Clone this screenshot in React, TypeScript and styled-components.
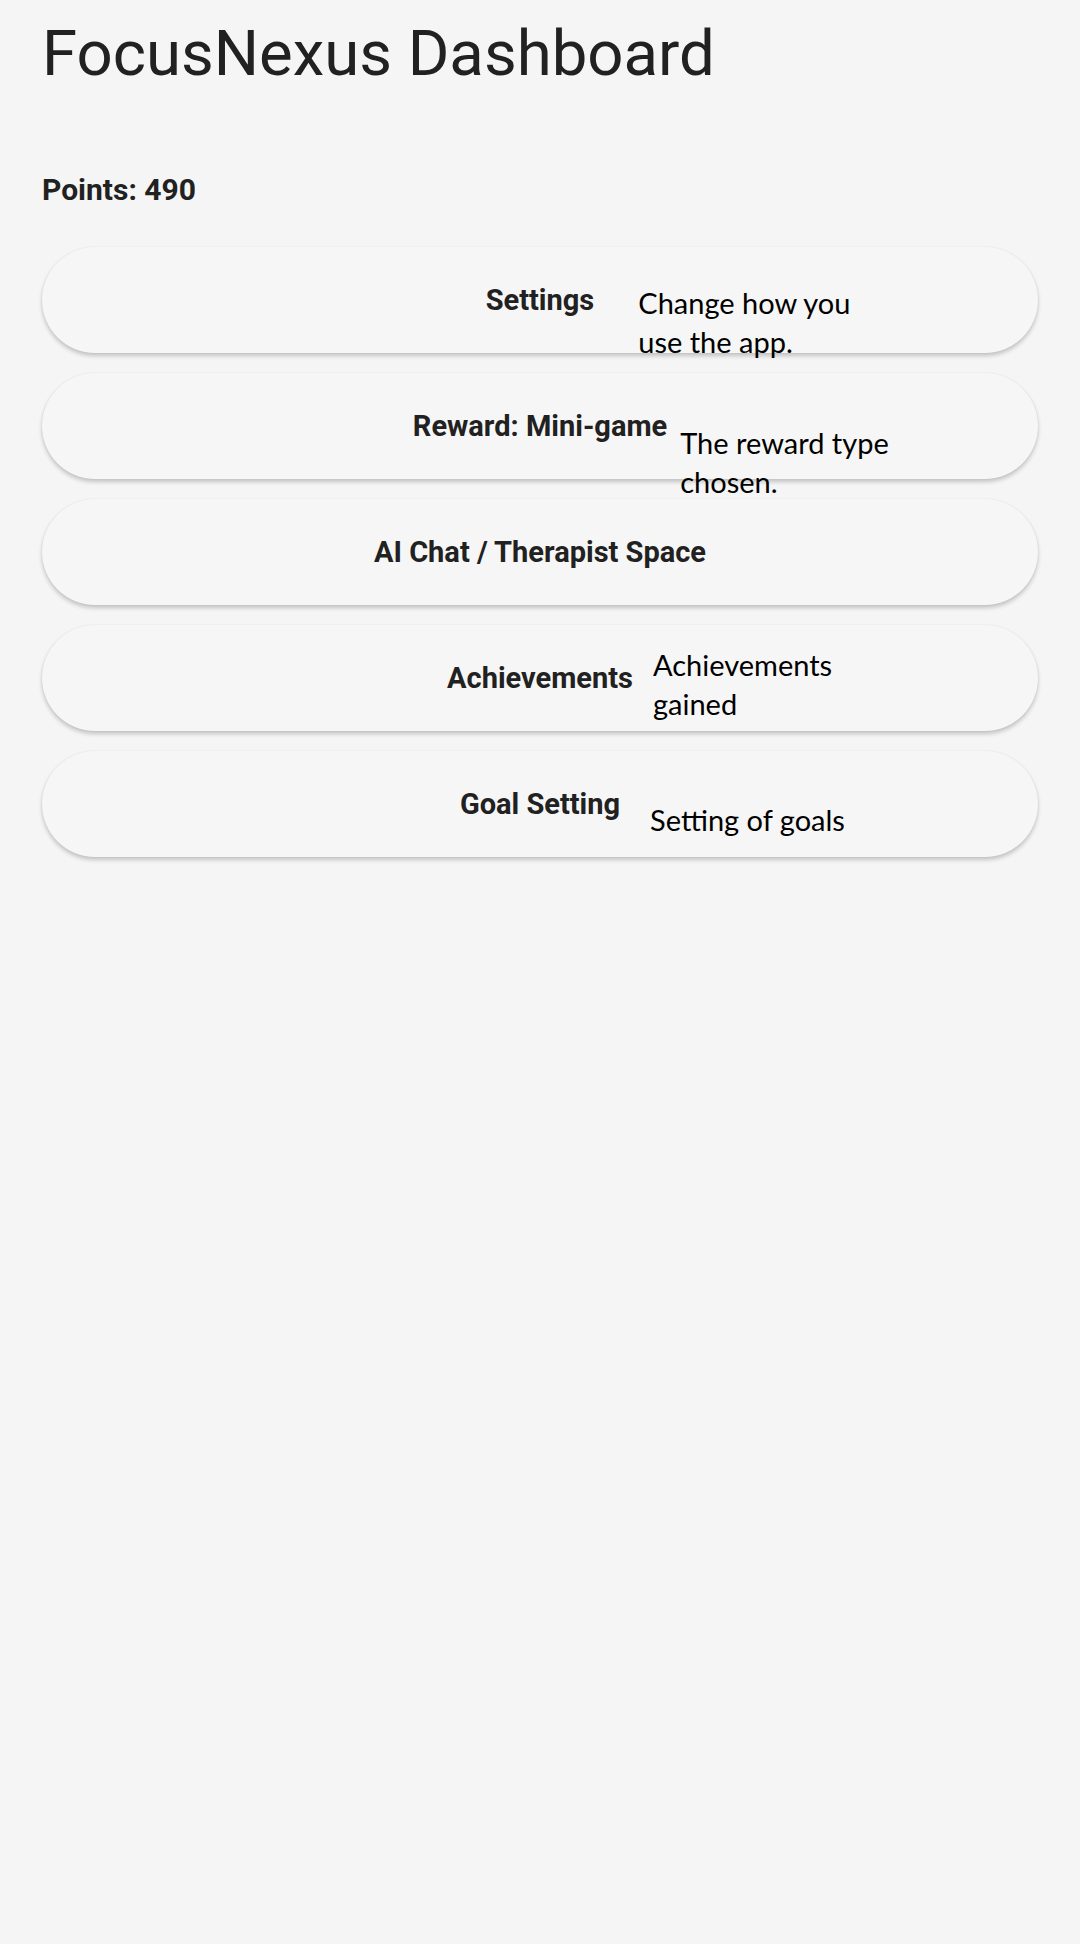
import React from "react";
import styled, { createGlobalStyle } from "styled-components";

const GlobalStyle = createGlobalStyle`
  html, body {
    margin: 0;
    padding: 0;
    background: #f5f5f5;
  }
  body {
    font-family: Roboto, "Liberation Sans", sans-serif;
    color: #212121;
  }
  * { box-sizing: border-box; }
`;

const Page = styled.main`
  min-height: 1944px;
  padding: 16px 42px 40px;
  display: flex;
  flex-direction: column;
`;

const Title = styled.h1`
  margin: 0;
  font-family: Roboto, "Liberation Sans", sans-serif;
  font-weight: 400;
  font-size: 63.5px;
  line-height: normal;
  color: #212121;
`;

const Points = styled.div`
  margin-top: 81px;
  font-family: Roboto, "Liberation Sans", sans-serif;
  font-weight: 700;
  font-size: 30px;
  line-height: normal;
  color: #212121;
`;

const CardList = styled.div`
  margin-top: 40px;
  display: flex;
  flex-direction: column;
  gap: 20px;
`;

const Card = styled.button`
  height: 106px;
  width: 100%;
  border: none;
  border-radius: 53px;
  background: #f6f6f6;
  box-shadow: 0 3px 4px rgba(0, 0, 0, 0.2), 0 0 2px rgba(0, 0, 0, 0.07);
  display: flex;
  align-items: center;
  justify-content: center;
  padding: 0;
  cursor: pointer;
`;

const CardTitle = styled.span`
  position: relative;
  font-family: Roboto, "Liberation Sans", sans-serif;
  font-weight: 700;
  font-size: 29px;
  line-height: normal;
  color: #212121;
  white-space: nowrap;
`;

const Description = styled.span<{ $gap: number; $top: number }>`
  position: absolute;
  left: calc(100% + ${(p) => p.$gap}px);
  top: ${(p) => p.$top}px;
  width: 250px;
  text-align: left;
  font-family: Lato, "Open Sans", sans-serif;
  font-weight: 400;
  font-size: 29px;
  line-height: 39px;
  color: #000;
  white-space: normal;
`;

type Item = {
  title: string;
  desc?: string;
  gap?: number;
  top?: number;
};

const items: Item[] = [
  { title: "Settings", desc: "Change how you use the app.", gap: 44, top: 0 },
  { title: "Reward: Mini-game", desc: "The reward type chosen.", gap: 13, top: 14 },
  { title: "AI Chat / Therapist Space" },
  { title: "Achievements", desc: "Achievements gained", gap: 20, top: -16 },
  { title: "Goal Setting", desc: "Setting of goals", gap: 30, top: 13 },
];

export default function App() {
  return (
    <>
      <GlobalStyle />
      <Page>
        <Title>FocusNexus Dashboard</Title>
        <Points>Points: 490</Points>
        <CardList>
          {items.map((it) => (
            <Card key={it.title} type="button">
              <CardTitle>
                {it.title}
                {it.desc && (
                  <Description $gap={it.gap ?? 20} $top={it.top ?? 0}>
                    {it.desc}
                  </Description>
                )}
              </CardTitle>
            </Card>
          ))}
        </CardList>
      </Page>
    </>
  );
}
